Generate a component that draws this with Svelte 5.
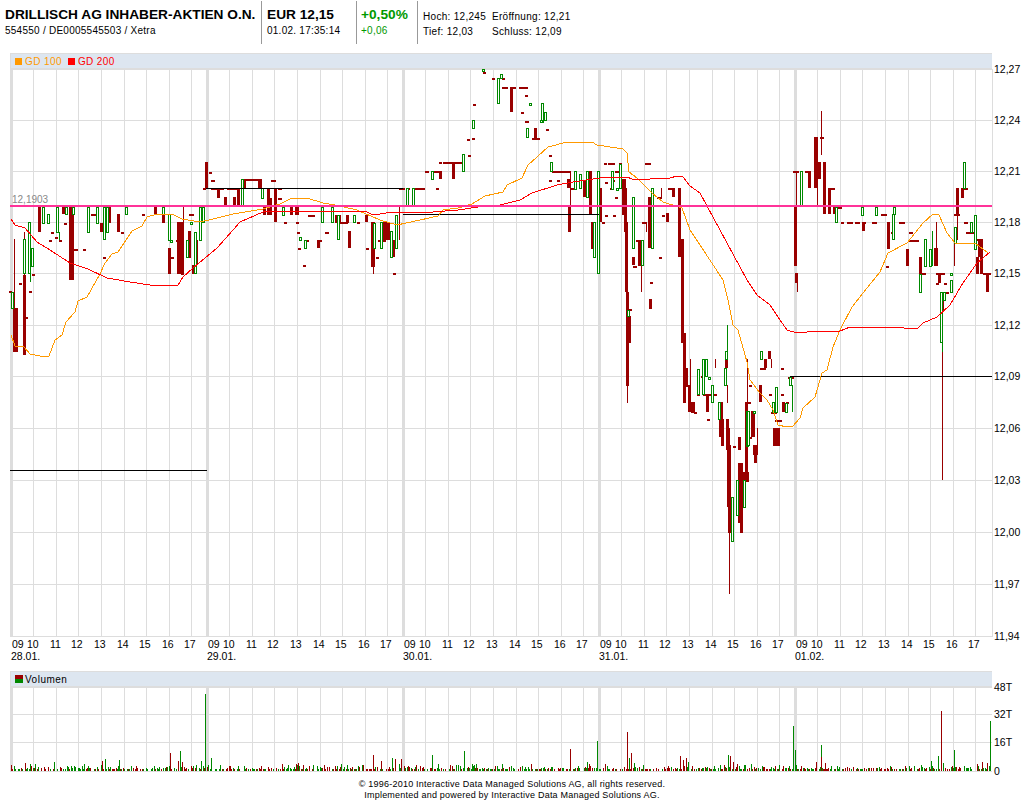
<script>
  const days = [10, 206, 402, 598, 794];
  const dates = ['28.01.', '29.01.', '30.01.', '31.01.', '01.02.'];
  const hourOffsets = [23, 46, 68, 91, 114, 136, 159, 181];
  const hourLabels = ['10', '11', '12', '13', '14', '15', '16', '17'];
  const labelOffsets = [17, 40, 61, 84, 107, 129, 152, 174];

  const hourLines = days.flatMap((d) => hourOffsets.map((o) => d + o));

  const priceTicks = [
    ['12,27', 69], ['12,24', 120], ['12,21', 171], ['12,18', 222], ['12,15', 273], ['12,12', 325],
    ['12,09', 376], ['12,06', 428], ['12,03', 480], ['12,00', 532], ['11,97', 584], ['11,94', 636]
  ];
  const volTicks = [['48T', 687], ['32T', 714], ['16T', 742], ['0', 771]];

  // filled (falling) candles: x, top, bottom, width
  const red = [
    [14,308,352,5],[24,275,355],[39,207,232],[63,207,214],[70,207,280,5],[101,223,232],[109,207,223],
    [118,214,232],[155,207,214],[163,214,223],[169,248,274],[178,222,274,6],[182,240,275],[189,231,258],[193,265,274],
    [206,162,188],[218,188,198],[225,197,205],[234,197,205],[238,189,205],[244,179,189],[259,179,188,4],
    [264,207,215],[268,188,215,3],[270,198,215,3],[275,188,222],[291,207,215],[296,207,215,4],
    [318,240,248],[336,215,223],[339,215,223],[347,215,223],[349,231,248],[366,215,222],[372,222,267,4],
    [384,222,240,4],[388,223,240],[393,240,257],
    [440,171,179],[453,162,179],[511,87,112],[535,128,138],[568,179,188],[569,207,232],[584,180,197],[590,171,214],
    [592,222,249],[600,188,222],[623,179,215,4],[625,188,232],[626,222,292],[627,292,386],[629,316,343],
    [633,257,265],[639,240,266],[650,299,309],[649,197,248],[667,213,222],[673,188,197],
    [679,188,257],[682,239,280],[682,280,343],[684,333,403],[686,368,387,3],[689,385,412],[692,402,413,4],
    [707,394,412],[721,402,419],[720,419,437,4],[722,437,446],[726,359,368],[727,419,450],[739,437,450],
    [746,402,450],[752,411,437],[754,445,450,4],[760,385,402],[765,359,368],[769,351,359,3],
    [774,428,446,7],[783,402,412],
    [720,402,437,3],[722,419,446,3],[728,428,507,3],[729,445,533,3],[739,463,523],[741,463,533],
    [744,472,482,6],[746,428,482,3],[753,411,437,3],[754,445,455,5],[755,455,463],
    [795,205,266,3],[796,273,283],[809,171,188],[815,137,188,4],[818,162,179,4],[824,162,214],[829,188,214],[834,206,214],
    [863,222,231],[888,222,249],[907,249,266],[920,257,274],[935,248,266,4],[939,273,283],[941,299,310,4],
    [957,188,214],[962,188,198],[979,239,257,5],[977,257,274],[981,257,274],[987,273,292]
  ];

  // hollow (rising) candles: x, top, bottom
  const green = [
    [12,292,308],[24,239,273],[29,222,273],[32,248,266],[43,207,223],[48,214,223],[57,207,232],[66,207,214],[73,207,214],
    [88,207,232],[97,207,223],[104,207,239],[107,207,232],[126,207,214],[163,207,214],[169,214,240],[171,240,242],
    [187,240,257],[191,222,224],[195,232,273],[200,207,240],[203,207,222],
    [242,179,205],[262,188,198],[283,207,215],[300,237,240],[305,240,248],[322,207,222],[332,207,222],[338,215,239],
    [354,215,222],[374,223,248],[381,222,248],[391,231,257],[396,215,248],
    [407,188,205],[413,188,205],[432,171,179],[463,154,171],[473,120,128],[483,69,71],[498,78,103],[501,74,78],
    [530,103,105],[542,103,122],[545,112,120],[541,120,122],[527,128,137],[551,162,171],[575,171,189],[580,174,188],
    [587,171,197],[594,222,257],[598,171,273],[612,171,189],[620,164,188],[617,188,190],[628,310,316],[633,197,248],
    [642,240,265],[652,188,248],
    [698,369,394],[703,359,394],[706,359,376],[709,377,379],[712,385,402],[719,402,419],[726,351,359],[725,368,385],
    [747,411,446],[754,411,413],[761,351,359],[773,402,412],[776,387,412],[786,403,412],[790,377,385],
    [732,497,541],[737,480,515],[744,480,507],[748,411,445],
    [801,171,205],[836,207,222],[862,207,215],[876,207,215],[893,214,239],[894,207,214],[925,239,266],[930,249,266],
    [920,274,292],[941,292,342],[944,292,300],[951,280,292],[951,273,275],[955,227,243],[964,162,188],[971,222,232],[975,215,249]
  ];

  // single ticks where open equals close: x, y, width
  const dashes = [
    [10,291,3],[20,283,3],[30,291,3],[33,274,3],[26,317,3],[65,223,3],[52,232,3],[50,240,3],[56,237,3],[60,240,3],
    [75,249,4],[84,249,3],[92,214,5],[104,257,3],[122,232,3],[143,214,3],[172,257,3],[177,240,3],[190,214,5],
    [204,188,3],[210,172,3],[212,180,4],[212,188,13],[228,188,12],[243,179,20],[272,180,5],[279,188,4],[279,198,4],
    [285,222,3],[297,222,3],[298,232,3],[299,248,3],[306,240,4],[304,265,3],[309,215,7],[320,240,3],[326,232,4],
    [341,222,8],[358,222,3],[367,248,3],[377,257,3],[379,240,8],[394,273,3],
    [400,188,6],[407,188,4],[415,188,11],[437,188,3],[426,171,4],[435,171,7],[440,162,3],[444,162,19],[469,155,3],
    [468,139,3],[473,138,3],[474,104,3],[484,72,3],[493,78,3],[503,78,3],[503,87,6],[511,87,6],[520,87,9],[526,95,3],
    [522,112,3],[526,121,4],[547,129,3],[533,138,8],[550,155,3],[553,171,18],[550,180,3],[558,180,3],[572,188,3],
    [603,222,3],[606,215,3],[614,215,3],[605,163,3],[609,163,7],[620,163,3],[616,171,4],[606,182,3],[613,180,3],
    [611,188,3],[616,197,3],[630,309,3],[634,266,4],[637,240,4],[643,222,5],[646,163,6],[658,197,5],[660,257,3],
    [651,282,3],[663,215,3],[669,188,7],[695,412,3],[698,394,3],[702,376,3],[704,394,8],[715,394,3],[708,419,3],
    [734,446,3],[750,385,3],[749,402,3],[761,368,6],[765,359,3],[770,394,3],[772,412,6],[782,368,3],[782,394,3],
    [787,402,3],[789,377,6],[776,420,7],[750,437,3],
    [794,171,6],[806,171,6],[821,137,4],[830,188,6],[838,207,5],[842,222,3],[848,222,6],[856,222,5],[863,222,4],
    [873,222,5],[882,214,6],[887,266,3],[892,232,4],[900,222,6],[910,232,4],[910,240,10],[922,273,5],[920,283,3],
    [937,283,3],[937,273,9],[945,283,3],[945,292,5],[955,214,6],[962,188,7],[965,222,4],[967,232,8],[984,273,8],[975,239,8]
  ];

  // wicks: x, top, bottom, colour
  const wicks = [
    [14,239,308,'r'],[24,232,275,'r'],[30,273,282,'g'],[59,232,240,'g'],[183,207,240,'r'],[197,240,265,'r'],
    [373,267,274,'r'],[399,207,240,'r'],
    [570,171,215,'r'],[641,266,292,'r'],[646,222,232,'r'],[661,188,197,'r'],
    [627,386,403,'r'],[690,359,385,'r'],[727,325,351,'g'],[727,385,403,'r'],[715,359,368,'r'],[747,359,402,'r'],
    [757,428,450,'r'],[771,359,368,'r'],[792,385,412,'g'],
    [729,533,594,'r'],[728,419,428,'r'],[757,428,445,'r'],
    [796,171,205,'r'],[797,283,292,'r'],[817,188,205,'r'],[821,111,155,'r'],
    [932,231,266,'g'],[936,222,248,'r'],[954,232,266,'r'],[957,214,240,'r'],[942,342,352,'g'],[942,352,480,'r']
  ];

  const orange = [
    [11,335],[15,346],[24,347],[30,354],[40,356],[49,356],[55,340],[62,335],[66,322],[75,312],[78,301],[87,297],
    [100,274],[105,263],[112,254],[118,252],[128,237],[132,231],[142,226],[147,217],[157,214],[172,214],[182,219],
    [200,222],[213,219],[233,214],[263,209],[280,204],[292,198],[307,198],[323,203],[335,205],[357,210],[380,220],
    [397,225],[420,220],[438,216],[443,210],[458,208],[472,204],[485,196],[503,192],[507,185],[522,178],[528,165],
    [537,157],[548,147],[567,142],[592,142],[597,145],[623,149],[627,153],[629,172],[637,178],[652,193],[663,202],
    [682,208],[690,230],[700,245],[723,280],[728,300],[733,325],[738,330],[747,362],[750,380],[760,393],[767,400],
    [773,410],[778,425],[787,427],[793,426],[800,418],[803,408],[815,397],[822,373],[827,370],[833,347],[840,330],
    [852,307],[867,288],[880,272],[888,253],[907,243],[923,223],[933,214],[939,215],[947,233],[955,243],[975,243],[988,253]
  ];

  const redLine = [
    [11,219],[15,225],[25,228],[37,242],[50,250],[70,263],[88,269],[107,278],[130,282],[150,285],[178,285],[183,277],
    [193,268],[217,248],[233,230],[240,222],[263,212],[283,211],[365,211],[373,215],[393,212],[433,212],[458,210],
    [478,207],[500,205],[520,200],[532,193],[557,185],[573,182],[600,178],[627,177],[632,179],[650,179],[670,178],
    [677,176],[683,177],[690,186],[700,193],[747,280],[757,295],[770,305],[780,320],[787,330],[797,333],[817,331],
    [840,331],[850,327],[890,327],[917,329],[923,323],[937,317],[950,305],[957,293],[963,283],[977,263],[990,252]
  ];

  const toPoints = (pts) => pts.map((p) => p.join(',')).join(' ');

  // background volume: short bars, seeded so the picture stays the same
  let seed = 17;
  function rnd() {
    seed = (seed * 9301 + 49297) % 233280;
    return seed / 233280;
  }
  const volume = [];
  for (let x = 11; x < 990; x += 1.36) {
    const r = rnd();
    if (r < 0.14) continue;
    const h = 2 + Math.floor(rnd() * rnd() * 6);
    volume.push([Math.round(x), 771 - h, rnd() < 0.5 ? 'g' : 'r']);
  }
  const spikes = [
    [11,765,'r'],[14,766,'g'],[25,763,'r'],[30,764,'g'],[54,762,'g'],[88,766,'g'],[102,761,'r'],[105,759,'g'],[119,760,'g'],
    [170,753,'r'],[178,761,'r'],[180,751,'g'],[182,762,'r'],[201,761,'g'],[205,694,'g'],[211,758,'g'],[296,764,'r'],[298,763,'r'],
    [373,755,'r'],[381,761,'r'],[392,758,'g'],[395,759,'r'],[399,764,'g'],[401,759,'r'],[432,755,'g'],[464,751,'g'],[458,765,'g'],
    [474,765,'g'],[570,749,'r'],[587,762,'g'],[589,764,'r'],[597,741,'g'],[627,732,'r'],[629,758,'g'],[631,753,'r'],[634,763,'g'],
    [643,765,'g'],[680,756,'r'],[683,760,'r'],[686,758,'r'],[688,762,'g'],[730,756,'r'],[728,755,'g'],[733,762,'r'],[793,726,'g'],
    [795,750,'g'],[816,762,'r'],[821,745,'g'],[821,757,'r'],[825,763,'r'],[931,761,'g'],[938,756,'g'],[941,711,'r'],[943,763,'g'],
    [954,750,'g'],[977,764,'r'],[982,762,'r'],[987,763,'r'],[990,721,'g']
  ];
</script>

<div class="page">
  <header class="quote">
    <div class="cell name">
      <div class="big">DRILLISCH AG INHABER-AKTIEN O.N.</div>
      <div class="small">554550 / DE0005545503 / Xetra</div>
    </div>
    <div class="cell price">
      <div class="big">EUR 12,15</div>
      <div class="small">01.02. 17:35:14</div>
    </div>
    <div class="cell change">
      <div class="big up">+0,50%</div>
      <div class="small up">+0,06</div>
    </div>
    <div class="cell stats">
      <span>Hoch: 12,245</span><span>Eröffnung: 12,21</span>
      <span>Tief: 12,03</span><span>Schluss: 12,09</span>
    </div>
  </header>

  <div class="band">
    <i class="swatch orange"></i><span class="orange-text">GD 100</span>
    <i class="swatch bright"></i><span class="red-text">GD 200</span>
  </div>

  <svg class="plot" width="1024" height="597" viewBox="0 69 1024 597" shape-rendering="crispEdges">
    {#each priceTicks as t}
      <rect x="10" y={t[1]} width="982" height="1" class="grid" />
      <text x="994" y={t[1] + 4} class="axis">{t[0]}</text>
    {/each}
    {#each hourLines as x}
      <rect {x} y="69" width="1" height="568" class="grid" />
    {/each}
    <rect x="992" y="69" width="1" height="568" class="grid" />
    {#each days as d, i}
      <rect x={d} y="69" width="3" height="568" class="grid" />
      <text x={d + 2} y="648" class="axis">09</text>
      {#each hourLabels as label, j}
        <text x={d + labelOffsets[j]} y="648" class="axis">{label}</text>
      {/each}
      <text x={d + 1} y="660" class="axis">{dates[i]}</text>
    {/each}

    <text x="12" y="203" class="ref">12,1903</text>

    {#each wicks as w}
      <rect x={w[0]} y={w[1]} width="1" height={w[2] - w[1]} class={w[3] === 'g' ? 'fill-green' : 'fill-red'} />
    {/each}
    {#each red as c}
      <rect x={c[0] - 1} y={c[1]} width={c[3] || 3} height={c[2] - c[1]} class="fill-red" />
    {/each}
    {#each dashes as d}
      <rect x={d[0] - 1} y={d[1]} width={d[2]} height="2" class="fill-red" />
    {/each}
    {#each green as c}
      <rect x={c[0] - 0.5} y={c[1] + 0.5} width="2" height={c[2] - c[1]} class="hollow" />
    {/each}

    <rect x="10" y="470" width="197" height="1" class="black" />
    <rect x="206" y="188" width="197" height="1" class="black" />
    <rect x="403" y="214" width="196" height="1" class="black" />
    <rect x="790" y="376" width="202" height="1" class="black" />

    <polyline points={toPoints(orange)} class="ma ma100" />
    <polyline points={toPoints(redLine)} class="ma ma200" />
    <rect x="10" y="205" width="982" height="2" class="pink" />
  </svg>

  <div class="band volume-band">
    <i class="vol-icon"></i><span>Volumen</span>
  </div>

  <svg class="plot" width="1024" height="94" viewBox="0 687 1024 94" shape-rendering="crispEdges">
    {#each volTicks as t}
      <rect x="10" y={t[1]} width="982" height="1" class="grid" />
      <text x="994" y={t[1] + 4} class="axis">{t[0]}</text>
    {/each}
    {#each hourLines as x}
      <rect {x} y="687" width="1" height="84" class="grid" />
    {/each}
    {#each days as d}
      <rect x={d} y="687" width="3" height="84" class="grid" />
    {/each}
    {#each volume as b}
      <rect x={b[0]} y={b[1]} width="1" height={771 - b[1]} class={b[2] === 'g' ? 'fill-green' : 'fill-red'} />
    {/each}
    {#each spikes as b}
      <rect x={b[0]} y={b[1]} width="1" height={771 - b[1]} class={b[2] === 'g' ? 'fill-green' : 'fill-red'} />
    {/each}
  </svg>

  <footer class="legal">
    <div>© 1996-2010 Interactive Data Managed Solutions AG, all rights reserved.</div>
    <div>Implemented and powered by Interactive Data Managed Solutions AG.</div>
  </footer>
</div>

<style>
  :global(body) {
    margin: 0;
    background: #fff;
  }

  .page {
    width: 1024px;
    height: 800px;
    overflow: hidden;
    font-family: "Liberation Sans", Arial, sans-serif;
    color: #000;
  }

  .quote {
    display: flex;
    height: 53px;
    box-sizing: border-box;
    padding-top: 1px;
  }

  .cell {
    height: 43px;
    box-sizing: border-box;
    padding: 6px 0 0 4px;
    border-right: 1px solid #999;
    white-space: nowrap;
  }

  .name {
    width: 262px;
    padding-left: 5px;
  }

  .price {
    width: 95px;
    padding-left: 5px;
  }

  .change {
    width: 61px;
  }

  .big {
    font-size: 13.7px;
    font-weight: bold;
    line-height: 16px;
  }

  .small {
    margin-top: 1px;
    font-size: 10px;
    line-height: 14px;
    letter-spacing: 0.25px;
  }

  .up {
    color: #090;
  }

  .stats {
    border-right: none;
    padding: 10px 0 0 5px;
    display: grid;
    grid-template-columns: 69px auto;
    grid-auto-rows: 15px;
    font-size: 10px;
    letter-spacing: 0.3px;
  }

  .band {
    display: flex;
    align-items: center;
    width: 982px;
    height: 16px;
    margin-left: 10px;
    box-sizing: border-box;
    padding-left: 4px;
    background: #dde6f0;
    border-top: 1px solid #ddd;
    border-left: 1px solid #ddd;
    border-bottom: 1px solid #ddd;
    font-size: 10px;
    letter-spacing: 0.4px;
  }

  .swatch {
    width: 7px;
    height: 7px;
    margin-right: 3px;
  }

  .orange {
    background: #f90;
  }

  .bright {
    background: #f00;
    margin-left: 6px;
  }

  .orange-text {
    color: #f90;
  }

  .red-text {
    color: #f00;
  }

  .volume-band {
    margin-top: 5px;
    letter-spacing: 0.5px;
  }

  .vol-icon {
    width: 8px;
    height: 8px;
    margin-right: 2px;
    background: linear-gradient(#900 50%, #080 50%);
  }

  .plot {
    display: block;
    overflow: visible;
  }

  .grid {
    fill: #ddd;
  }

  .axis {
    font-size: 10.5px;
    fill: #000;
  }

  .ref {
    font-size: 10px;
    fill: #888;
  }

  .fill-red {
    fill: #900;
  }

  .fill-green {
    fill: #080;
  }

  .hollow {
    fill: #fff;
    stroke: #080;
    stroke-width: 1;
  }

  .black {
    fill: #000;
  }

  .pink {
    fill: #f39;
  }

  .ma {
    fill: none;
    stroke-width: 1;
  }

  .ma100 {
    stroke: #f90;
  }

  .ma200 {
    stroke: #f00;
  }

  .legal {
    margin-top: -2px;
    text-align: center;
    font-size: 9px;
    line-height: 11px;
    letter-spacing: 0.22px;
  }
</style>
